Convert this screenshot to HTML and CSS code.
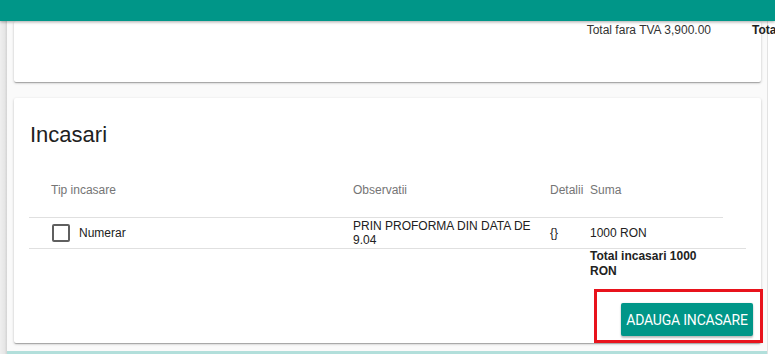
FILE: index.html
```html
<!DOCTYPE html>
<html lang="ro">
<head>
<meta charset="utf-8">
<title>Incasari</title>
<link rel="stylesheet" href="styles.css">
</head>
<body>
<header class="topbar"></header>
<div class="page">
  <aside class="rail"></aside>
  <main class="content">
    <section class="card card-summary">
      <div class="totals">
        <span></span>
        <span class="total-net">Total fara TVA 3,900.00</span>
        <span class="total-gross">Total cu TVA 4,641.00</span>
      </div>
    </section>
    <section class="card card-payments">
      <h2 class="card-title">Incasari</h2>
      <div class="table">
        <div class="row row-head">
          <div class="cell cell-type">Tip incasare</div>
          <div class="cell">Observatii</div>
          <div class="cell">Detalii</div>
          <div class="cell">Suma</div>
        </div>
        <div class="row row-data">
          <div class="cell cell-type"><span class="checkbox"></span><span>Numerar</span></div>
          <div class="cell cell-obs">PRIN PROFORMA DIN DATA DE 9.04</div>
          <div class="cell">{}</div>
          <div class="cell">1000 RON</div>
          <div class="cell"></div>
        </div>
        <div class="row row-total">
          <div class="cell cell-sum-total">Total incasari 1000 RON</div>
        </div>
      </div>
      <div class="actions">
        <div class="highlight-wrap">
          <button class="btn-primary" type="button">ADAUGA INCASARE</button>
          <span class="highlight"></span>
        </div>
      </div>
    </section>
    <div class="next-section"></div>
  </main>
</div>
</body>
</html>
```
FILE: styles.css
```css
* { box-sizing: border-box; }

html, body {
  margin: 0;
  padding: 0;
  height: 100%;
}

body {
  background: #ffffff;
  font-family: "Liberation Sans", Arial, sans-serif;
  font-size: 12px;
  color: #212121;
  overflow: hidden;
}

.topbar {
  position: relative;
  z-index: 2;
  height: 21px;
  background: #009688;
  box-shadow: 0 1px 3px rgba(0, 0, 0, 0.35);
}

.page {
  display: flex;
  min-height: calc(100% - 21px);
}

.rail {
  width: 7px;
  flex: 0 0 7px;
  background: linear-gradient(to right, #efefef, #e6e6e6 65%, #d3d3d3);
}

.content {
  width: 761px;
  flex: 0 0 761px;
  padding: 0 7px;
  background: #fafafa;
  border-right: 1px solid #e2e2e2;
}

.card {
  width: 747px;
  background: #ffffff;
  border-radius: 2px;
  box-shadow: 0 1px 3px rgba(0, 0, 0, 0.2), 0 1px 1px rgba(0, 0, 0, 0.14), 0 2px 1px -1px rgba(0, 0, 0, 0.12);
}

.card-summary {
  height: 61px;
  padding-top: 2px;
  padding-right: 9px;
}

.totals {
  display: grid;
  grid-template-columns: 1fr auto 0;
  column-gap: 41px;
  line-height: 14px;
  color: #333333;
}

.total-gross {
  white-space: nowrap;
  font-weight: bold;
  color: #222222;
}

.card-payments {
  position: relative;
  margin-top: 16px;
  padding: 24px 8px 7px 15px;
}

.card-title {
  margin: 0;
  padding-left: 1px;
  font-family: "Liberation Sans", Arial, sans-serif;
  font-size: 22px;
  font-weight: normal;
  line-height: 26px;
  color: #212121;
}

.table {
  margin-top: 14px;
}

.row {
  display: grid;
  grid-template-columns: 324px 197px 40px 133px;
}

.row-head {
  width: 694px;
  height: 56px;
  align-items: center;
  border-bottom: 1px solid #e0e0e0;
  color: #757575;
  font-weight: 500;
  line-height: 14px;
}

.row-head .cell-type {
  padding-left: 22px;
}

.row-data {
  width: 717px;
  grid-template-columns: 324px 197px 40px 133px 23px;
  min-height: 31px;
  align-items: center;
  border-bottom: 1px solid #e0e0e0;
  line-height: 14px;
  color: #212121;
}

.row-data .cell-type {
  display: flex;
  align-items: center;
  gap: 9px;
  padding-left: 23px;
}

.cell-obs {
  padding-right: 6px;
}

.checkbox {
  display: inline-block;
  width: 18px;
  height: 18px;
  border: 2px solid #5f5f5f;
  border-radius: 2px;
}

.row-total .cell-sum-total {
  grid-column: 4;
  font-weight: bold;
  line-height: 15px;
  color: #222222;
}

.actions {
  display: flex;
  justify-content: flex-end;
  margin-top: 24px;
}

.highlight-wrap {
  position: relative;
  display: flex;
}

.btn-primary {
  width: 132px;
  height: 33px;
  padding: 0;
  border: none;
  border-radius: 2px;
  background: #009688;
  color: #ffffff;
  font-family: Roboto, "Liberation Sans", Arial, sans-serif;
  font-size: 14px;
  letter-spacing: -0.2px;
  box-shadow: 0 2px 2px rgba(0, 0, 0, 0.24), 0 0 2px rgba(0, 0, 0, 0.12);
}

.highlight {
  position: absolute;
  top: -14px;
  left: -27px;
  right: -10px;
  bottom: -7px;
  border: 3px solid #e8131c;
  pointer-events: none;
}

.next-section {
  margin: 8px -7px 0;
  height: 12px;
  background: #b2dfdb;
}
```
